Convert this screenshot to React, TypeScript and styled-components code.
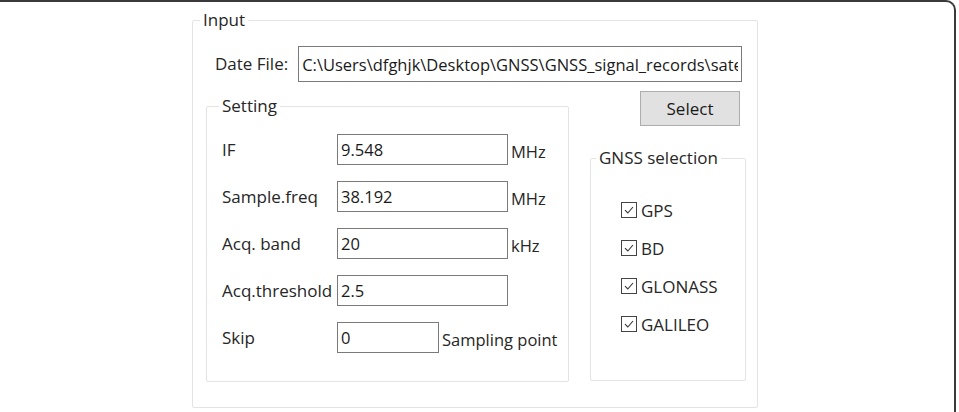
import React from 'react';
import styled, {createGlobalStyle} from 'styled-components';

const Global = createGlobalStyle`
	html, body {
		margin: 0;
		padding: 0;
		background: #ffffff;
	}
	body {
		font-family: 'Open Sans', 'Noto Sans', sans-serif;
		color: #262626;
	}
`;

const Frame = styled.div`
	box-sizing: border-box;
	width: 956px;
	height: 412px;
	padding: 8px 0 0 192px;
	border-top: 2px solid #3a3a3a;
	border-right: 2px solid #3a3a3a;
	border-top-right-radius: 10px;
`;

const Group = styled.fieldset<{$width: number; $height: number}>`
	box-sizing: border-box;
	width: ${(p) => p.$width}px;
	height: ${(p) => p.$height}px;
	margin: 0;
	padding: 0;
	min-width: 0;
	border: 1px solid #e3e3e3;
	border-radius: 2px;
`;

const Legend = styled.legend<{$offset: number}>`
	margin-left: ${(p) => p.$offset}px;
	padding: 0 3px;
	font-size: 17px;
	line-height: 20px;
`;

const FileRow = styled.div`
	display: flex;
	align-items: center;
	margin: 16px 13px 0 22px;
	gap: 10px;
`;

const FieldLabel = styled.span`
	font-size: 17px;
	line-height: 20px;
	white-space: nowrap;
`;

const TextBox = styled.input<{$width: number; $height: number}>`
	box-sizing: border-box;
	width: ${(p) => p.$width}px;
	height: ${(p) => p.$height}px;
	padding: 0 3px;
	border: 1px solid #7a7a7a;
	background: #fff;
	font-family: inherit;
	font-size: 16.5px;
	color: #1a1a1a;
	outline: none;
`;

const Body = styled.div`
	display: flex;
	align-items: flex-start;
	gap: 21px;
	margin: 9px 0 0 13px;
`;

const SettingBox = styled.div`
	margin-top: 5px;
`;

const Rows = styled.div`
	display: flex;
	flex-direction: column;
	gap: 16px;
	padding: 18px 0 0 15px;
`;

const Row = styled.div`
	display: flex;
	align-items: center;
	height: 31px;
`;

const RowLabel = styled.span`
	width: 115px;
	font-size: 17px;
	white-space: nowrap;
`;

const Unit = styled.span`
	margin: 3px 0 0 3px;
	font-size: 16.5px;
	white-space: nowrap;
`;

const Side = styled.div`
	display: flex;
	flex-direction: column;
`;

const SelectButton = styled.button`
	box-sizing: border-box;
	width: 100px;
	height: 35px;
	margin: 0 0 22px 50px;
	border: 1px solid #adadad;
	background: #e1e1e1;
	font-family: inherit;
	font-size: 17px;
	color: #1a1a1a;
`;

const Checks = styled.div`
	display: flex;
	flex-direction: column;
	gap: 18px;
	padding: 32px 0 0 30px;
`;

const CheckRow = styled.label`
	display: flex;
	align-items: center;
	gap: 4px;
	height: 20px;
	font-size: 17px;
`;

const Box = styled.span`
	box-sizing: border-box;
	display: inline-flex;
	align-items: center;
	justify-content: center;
	width: 16px;
	height: 16px;
	border: 1px solid #444;
	background: #fff;
`;

const Check = () => (
	<Box>
		<svg width="12" height="12" viewBox="0 0 12 12">
			<polyline points="2,6.2 4.8,9 10,3" fill="none" stroke="#333" strokeWidth="1.1" />
		</svg>
	</Box>
);

const settings = [
	{label: 'IF', value: '9.548', width: 171, unit: 'MHz'},
	{label: 'Sample.freq', value: '38.192', width: 171, unit: 'MHz'},
	{label: 'Acq. band', value: '20', width: 171, unit: 'kHz'},
	{label: 'Acq.threshold', value: '2.5', width: 171, unit: ''},
	{label: 'Skip', value: '0', width: 102, unit: 'Sampling point'},
];

const systems = ['GPS', 'BD', 'GLONASS', 'GALILEO'];

const App = () => {
	return (
		<>
			<Global />
			<Frame>
				<Group $width={566} $height={398}>
					<Legend $offset={7}>Input</Legend>
					<FileRow>
						<FieldLabel>Date File:</FieldLabel>
						<TextBox
							$width={444}
							$height={36}
							readOnly
							value="C:\Users\dfghjk\Desktop\GNSS\GNSS_signal_records\satellite_data.dat"
						/>
					</FileRow>
					<Body>
						<SettingBox>
							<Group $width={363} $height={286}>
								<Legend $offset={12}>Setting</Legend>
								<Rows>
									{settings.map((s) => (
										<Row key={s.label}>
											<RowLabel>{s.label}</RowLabel>
											<TextBox $width={s.width} $height={31} readOnly value={s.value} />
											{s.unit && <Unit>{s.unit}</Unit>}
										</Row>
									))}
								</Rows>
							</Group>
						</SettingBox>
						<Side>
							<SelectButton>Select</SelectButton>
							<Group $width={156} $height={233}>
								<Legend $offset={5}>GNSS selection</Legend>
								<Checks>
									{systems.map((name) => (
										<CheckRow key={name}>
											<Check />
											{name}
										</CheckRow>
									))}
								</Checks>
							</Group>
						</Side>
					</Body>
				</Group>
			</Frame>
		</>
	);
};

export default App;
